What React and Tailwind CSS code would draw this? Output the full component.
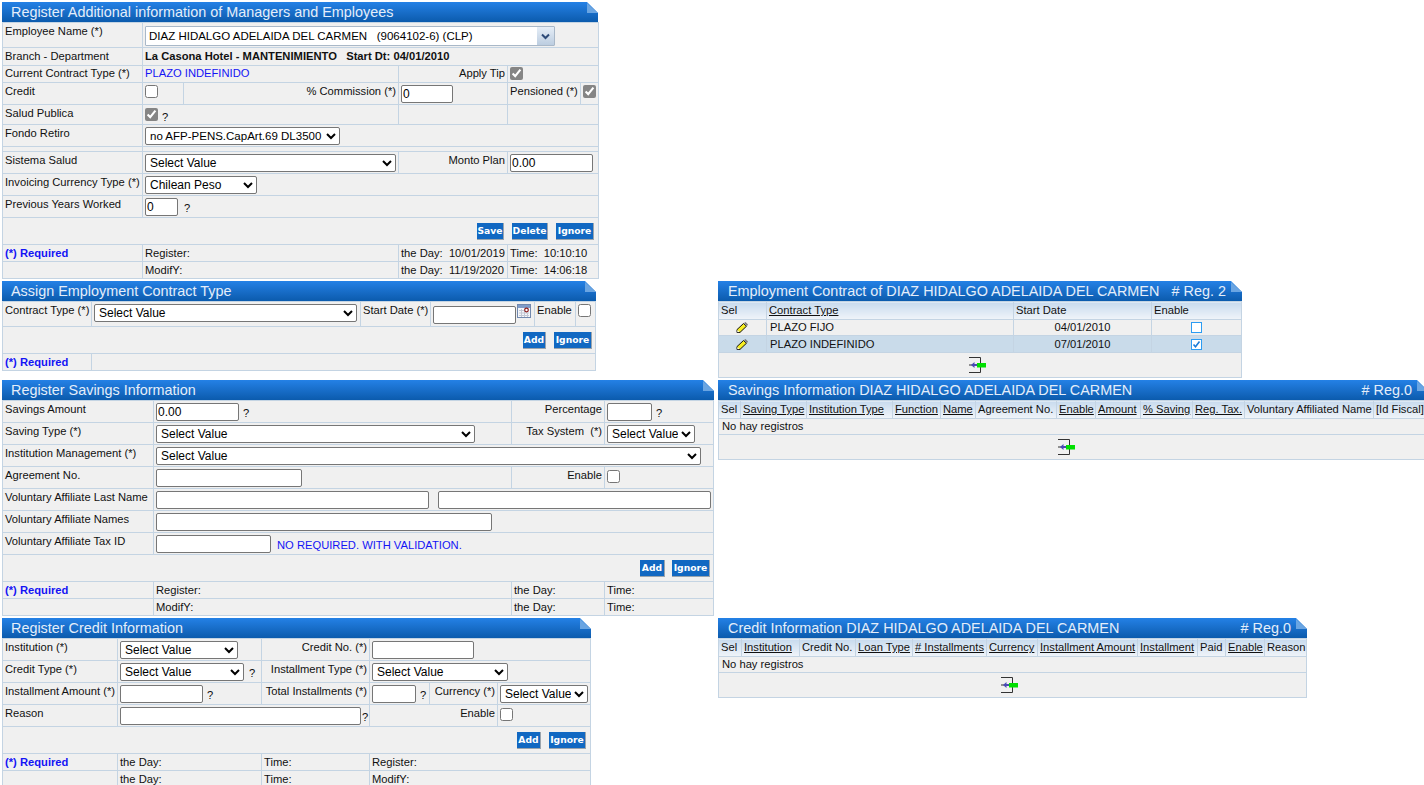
import React from 'react';

const line = 'border border-[#c4d4e3]';
const blue = 'text-[#1414f5]';

// folded corner of the title bars
const Fold = () => (
  <svg className="absolute right-0 top-0" width="12" height="12" viewBox="0 0 12 12">
    <path d="M1 0H12V11Z" fill="#ffffff" />
    <path d="M1 1L12 11H1Z" fill="#6aa5e2" />
  </svg>
);

const Title = ({ children, right, list }) => (
  <div className={`relative flex h-[20px] items-center justify-between bg-gradient-to-b from-[#2481e6] to-[#0b5bad] ${list ? 'pl-[10px]' : 'pl-[9px]'} pr-[16px] text-[14.4px] leading-[20px] text-[#e4eefa]`}>
    <span className="whitespace-pre">{children}</span>
    {right && <span className="whitespace-pre">{right}</span>}
    <Fold />
  </div>
);

const Panel = ({ width, title, right, list, children }) => (
  <div className={width}>
    <Title right={right} list={list}>{title}</Title>
    {children}
  </div>
);

const Grid = ({ cols, children }) => (
  <table className="table-fixed border-collapse bg-[#f0f0f0]" style={{ width: cols.reduce((a, b) => a + b, 0) }}>
    <colgroup>
      {cols.map((c, i) => <col key={i} style={{ width: c }} />)}
    </colgroup>
    <tbody>{children}</tbody>
  </table>
);

const Td = ({ children, span, right, pad = 'pt-[2px]', className = '' }) => (
  <td colSpan={span} className={`${line} ${pad} ${right ? 'pr-[2px] text-right' : 'pl-[2px]'} overflow-hidden whitespace-pre align-top ${className}`}>
    {children}
  </td>
);

const Ctl = ({ children, span, className = '' }) => (
  <td colSpan={span} className={`${line} pl-[2px] pt-[2px] align-top whitespace-pre ${className}`}>{children}</td>
);

const Sel = ({ w, size = 'text-[12px]', children = 'Select Value' }) => (
  <select className={`${w} ${size} h-[18px] rounded-[2px] border border-[#767676] bg-white align-top leading-[16px] text-black`} defaultValue={children}>
    <option>{children}</option>
  </select>
);

const Inp = ({ w, value = '' }) => (
  <input readOnly value={value} className={`${w} h-[18px] rounded-[2px] border border-[#767676] bg-white px-[1px] align-top text-[12px] leading-[16px] text-black`} />
);

const Chk = ({ on, className = '' }) => (
  <input type="checkbox" defaultChecked={on} className={`m-0 h-[13px] w-[13px] align-top accent-[#858585] ${className}`} />
);

const Q = ({ className = 'ml-[4px]' }) => <span className={`${className} inline-block pt-[4px] align-top`}>?</span>;

const Btn = ({ w, children }) => (
  <button className={`${w} h-[17px] border-r border-b border-[#9aa4ad] bg-[#1168c2] text-center font-['DejaVu_Sans'] text-[9.2px] font-bold leading-[15px] text-white`}>
    {children}
  </button>
);

const Actions = ({ span, gap, pr, children }) => (
  <tr className="h-[27px]">
    <td colSpan={span} className={`${line} align-middle`}>
      <div className={`flex justify-end ${gap} ${pr}`}>{children}</div>
    </td>
  </tr>
);

const Pencil = () => (
  <svg width="12" height="11" viewBox="0 0 12 11" className="ml-[17px] block">
    <path d="M7.5 1.5L10.5 4.2L4 10.4L1 10.5L1 7.6Z" fill="#f7ee22" stroke="#111" strokeWidth="1" />
    <path d="M8 1L9.5 0L12 2.4L11 4Z" fill="#7d7d7d" />
    <path d="M1.4 8L3.4 10L1.4 10.2Z" fill="#fff" />
  </svg>
);

const Pager = () => (
  <svg width="17" height="16" viewBox="0 0 17 16" className="block">
    <path d="M0 0.5H11.5V15.5H0M0 8H3" fill="none" stroke="#333" strokeWidth="1" />
    <path d="M2 8L5.5 5V7H8V9H5.5V11Z" fill="#4a4ab4" />
    <rect x="8" y="6" width="9" height="4.5" fill="#00e000" />
  </svg>
);

const Calendar = () => (
  <svg width="14" height="14" viewBox="0 0 14 14" className="block">
    <rect x="0.5" y="0.5" width="13" height="13" fill="#f4f6fa" stroke="#7188ae" />
    <rect x="1" y="1" width="12" height="3" fill="#7f9cc9" />
    <path d="M2 6.5H8M2 9H12M2 11.5H12M4.5 5V13M7.5 5V13M10.5 9V13" stroke="#c3c7d3" strokeWidth="1" />
    <circle cx="9.5" cy="6" r="1.8" fill="#fff" stroke="#8b1a1a" strokeWidth="1.2" />
  </svg>
);

const TableCheck = ({ on }) => (
  <span className="mx-auto block h-[11px] w-[11px] border border-[#2c9cf2] bg-white">
    {on && (
      <svg width="9" height="9" viewBox="0 0 9 9" className="block">
        <path d="M1.5 4.5L3.5 6.8L7.5 1.5" fill="none" stroke="#1a7bd8" strokeWidth="1.6" />
      </svg>
    )}
  </span>
);

const Th = ({ children, u }) => (
  <th className={`${line} overflow-hidden whitespace-pre bg-gradient-to-b from-[#c8dbee] to-[#f0f4f9] px-[2px] text-left align-middle font-normal`}>
    <span className={u ? 'underline' : ''}>{children}</span>
  </th>
);

const PagerRow = ({ span, pr }) => (
  <tr className="h-[25px]">
    <td colSpan={span} className={`${line} align-middle`}>
      <div className={`flex justify-center ${pr}`}><Pager /></div>
    </td>
  </tr>
);

const EmptyList = ({ cols, heads, width, title, right, pr }) => (
  <Panel width={width} title={title} right={right} list>
    <Grid cols={cols}>
      <tr className="h-[18px]">
        {heads.map(([t, u], i) => <Th key={i} u={u}>{t}</Th>)}
      </tr>
      <tr className="h-[16px]">
        <td colSpan={cols.length} className={`${line} pl-[3px] align-middle`}>No hay registros</td>
      </tr>
      <PagerRow span={cols.length} pr={pr} />
    </Grid>
  </Panel>
);

export default function App() {
  return (
    <div className="grid h-[785px] grid-cols-[718px_706px] grid-rows-[279px_99px_238px_165px] overflow-hidden bg-white pt-[2px] font-['Liberation_Sans',Arial,sans-serif] text-[11.2px] leading-[13px] text-[#111]">
      {/* managers and employees */}
      <div className="col-start-1 row-start-1 pl-[2px]">
        <Panel width="w-[596px]" title="Register Additional information of Managers and Employees">
          <Grid cols={[140, 41, 215, 109, 73, 18]}>
            <tr className="h-[25px]">
              <Td>Employee Name (*)</Td>
              <td colSpan={5} className={`${line} pl-[2px] pt-[3px] align-top`}>
                <div className="flex h-[20px] w-[410px] rounded-[1px] border border-[#a9b8c8] bg-white">
                  <span className="flex-1 whitespace-pre pl-[3px] text-[11.5px] leading-[18px] text-black">DIAZ HIDALGO ADELAIDA DEL CARMEN   (9064102-6) (CLP)</span>
                  <span className="flex w-[17px] items-center justify-center bg-gradient-to-b from-[#e6eef7] to-[#bccde0]">
                    <svg width="9" height="7" viewBox="0 0 9 7"><path d="M1 1.5L4.5 5L8 1.5" fill="none" stroke="#2c4a78" strokeWidth="2" /></svg>
                  </span>
                </div>
              </td>
            </tr>
            <tr className="h-[18px]">
              <Td>Branch - Department</Td>
              <Td span={5} className="font-bold">La Casona Hotel - MANTENIMIENTO   Start Dt: 04/01/2010</Td>
            </tr>
            <tr className="h-[17px]">
              <Td pad="pt-[1px]">Current Contract Type (*)</Td>
              <Td span={2} pad="pt-[1px]" className={blue}>PLAZO INDEFINIDO</Td>
              <Td right pad="pt-[1px]">Apply Tip</Td>
              <td colSpan={2} className={`${line} pl-[2px] pt-[1px] align-top`}><Chk on /></td>
            </tr>
            <tr className="h-[22px]">
              <Td>Credit</Td>
              <Ctl><Chk /></Ctl>
              <Td right>% Commission (*)</Td>
              <Ctl><Inp w="w-[52px]" value="0" /></Ctl>
              <Td>Pensioned (*)</Td>
              <Ctl><Chk on /></Ctl>
            </tr>
            <tr className="h-[20px]">
              <Td>Salud Publica</Td>
              <Ctl span={2}><Chk on className="mt-[1px]" /><Q /></Ctl>
              <Td />
              <Td span={2} />
            </tr>
            <tr className="h-[22px]">
              <Td>Fondo Retiro</Td>
              <Ctl span={5}><Sel w="w-[195px]" size="text-[11.5px]">no AFP-PENS.CapArt.69 DL3500</Sel></Ctl>
            </tr>
            <tr className="h-[5px]">
              <td className={line} />
              <td colSpan={5} className={line} />
            </tr>
            <tr className="h-[22px]">
              <Td>Sistema Salud</Td>
              <Ctl span={2}><Sel w="w-[251px]" /></Ctl>
              <Td right>Monto Plan</Td>
              <Ctl span={2}><Inp w="w-[83px]" value="0.00" /></Ctl>
            </tr>
            <tr className="h-[22px]">
              <Td>Invoicing Currency Type (*)</Td>
              <Ctl span={5}><Sel w="w-[112px]">Chilean Peso</Sel></Ctl>
            </tr>
            <tr className="h-[22px]">
              <Td>Previous Years Worked</Td>
              <Ctl span={5}><Inp w="w-[33px]" value="0" /><Q className="ml-[6px]" /></Ctl>
            </tr>
            <Actions span={6} gap="gap-[8px]" pr="pr-[4px]">
              <Btn w="w-[27px]">Save</Btn>
              <Btn w="w-[36px]">Delete</Btn>
              <Btn w="w-[38px]">Ignore</Btn>
            </Actions>
            <tr className="h-[17px]">
              <Td className={`font-bold ${blue}`}>(*) Required</Td>
              <Td span={2}>Register:</Td>
              <Td>the Day:  10/01/2019</Td>
              <Td span={2}>Time:  10:10:10</Td>
            </tr>
            <tr className="h-[17px]">
              <Td />
              <Td span={2}>ModifY:</Td>
              <Td>the Day:  11/19/2020</Td>
              <Td span={2}>Time:  14:06:18</Td>
            </tr>
          </Grid>
        </Panel>
      </div>

      {/* contract type */}
      <div className="col-start-1 row-start-2 pl-[2px]">
        <Panel width="w-[594px]" title="Assign Employment Contract Type">
          <Grid cols={[89, 269, 70, 104, 41, 20]}>
            <tr className="h-[25px]">
              <Td>Contract Type (*)</Td>
              <Ctl><Sel w="w-[263px]" /></Ctl>
              <Td>Start Date (*)</Td>
              <td className={`${line} pl-[2px] align-top`}>
                <div className="flex items-start gap-[1px] pt-[4px]">
                  <Inp w="w-[83px]" />
                  <span className="-mt-[2px]"><Calendar /></span>
                </div>
              </td>
              <Td>Enable</Td>
              <Ctl><Chk /></Ctl>
            </tr>
            <Actions span={6} gap="gap-[8px]" pr="pr-[3px]">
              <Btn w="w-[23px]">Add</Btn>
              <Btn w="w-[38px]">Ignore</Btn>
            </Actions>
            <tr className="h-[17px]">
              <Td className={`font-bold ${blue}`}>(*) Required</Td>
              <Td span={5} />
            </tr>
          </Grid>
        </Panel>
      </div>

      {/* employment contracts */}
      <div className="col-start-2 row-start-2">
        <Panel width="w-[524px]" title="Employment Contract of DIAZ HIDALGO ADELAIDA DEL CARMEN" right="# Reg. 2" list>
          <Grid cols={[48, 247, 138, 90]}>
            <tr className="h-[18px]">
              <Th>Sel</Th>
              <Th u>Contract Type</Th>
              <Th>Start Date</Th>
              <Th>Enable</Th>
            </tr>
            <tr className="h-[16px]">
              <td className={line}><Pencil /></td>
              <td className={`${line} pl-[3px] align-middle`}>PLAZO FIJO</td>
              <td className={`${line} text-center align-middle`}>04/01/2010</td>
              <td className={line}><TableCheck /></td>
            </tr>
            <tr className="h-[17px] bg-[#c9dbea]">
              <td className={line}><Pencil /></td>
              <td className={`${line} pl-[3px] align-middle`}>PLAZO INDEFINIDO</td>
              <td className={`${line} text-center align-middle`}>07/01/2010</td>
              <td className={line}><TableCheck on /></td>
            </tr>
            <PagerRow span={4} pr="pr-[6px]" />
          </Grid>
        </Panel>
      </div>

      {/* savings form */}
      <div className="col-start-1 row-start-3 pl-[2px]">
        <Panel width="w-[712px]" title="Register Savings Information">
          <Grid cols={[151, 358, 93, 109]}>
            <tr className="h-[22px]">
              <Td>Savings Amount</Td>
              <Ctl><Inp w="w-[83px]" value="0.00" /><Q /></Ctl>
              <Td right>Percentage</Td>
              <Ctl><Inp w="w-[45px]" /><Q /></Ctl>
            </tr>
            <tr className="h-[22px]">
              <Td>Saving Type (*)</Td>
              <Ctl><Sel w="w-[319px]" /></Ctl>
              <Td right>Tax System  (*)</Td>
              <Ctl><Sel w="w-[88px]" /></Ctl>
            </tr>
            <tr className="h-[22px]">
              <Td>Institution Management (*)</Td>
              <Ctl span={3}><Sel w="w-[545px]" /></Ctl>
            </tr>
            <tr className="h-[22px]">
              <Td>Agreement No.</Td>
              <Ctl><Inp w="w-[146px]" /></Ctl>
              <Td right>Enable</Td>
              <Ctl><Chk className="mt-[1px]" /></Ctl>
            </tr>
            <tr className="h-[22px]">
              <Td>Voluntary Affiliate Last Name</Td>
              <Ctl span={3}>
                <div className="flex gap-[9px]"><Inp w="w-[273px]" /><Inp w="w-[273px]" /></div>
              </Ctl>
            </tr>
            <tr className="h-[22px]">
              <Td>Voluntary Affiliate Names</Td>
              <Ctl span={3}><Inp w="w-[336px]" /></Ctl>
            </tr>
            <tr className="h-[22px]">
              <Td>Voluntary Affiliate Tax ID</Td>
              <Ctl span={3}>
                <Inp w="w-[115px]" /><span className={`ml-[6px] inline-block pt-[4px] align-top ${blue}`}>NO REQUIRED. WITH VALIDATION.</span>
              </Ctl>
            </tr>
            <Actions span={4} gap="gap-[7px]" pr="pr-[3px]">
              <Btn w="w-[25px]">Add</Btn>
              <Btn w="w-[38px]">Ignore</Btn>
            </Actions>
            <tr className="h-[17px]">
              <Td className={`font-bold ${blue}`}>(*) Required</Td>
              <Td>Register:</Td>
              <Td>the Day:</Td>
              <Td>Time:</Td>
            </tr>
            <tr className="h-[17px]">
              <Td />
              <Td>ModifY:</Td>
              <Td>the Day:</Td>
              <Td>Time:</Td>
            </tr>
          </Grid>
        </Panel>
      </div>

      {/* savings list */}
      <div className="col-start-2 row-start-3">
        <EmptyList
          width="w-[710px]"
          title="Savings Information DIAZ HIDALGO ADELAIDA DEL CARMEN"
          right="# Reg.0"
          pr="pr-[14px]"
          cols={[22, 66, 86, 48, 35, 81, 39, 45, 52, 52, 129, 55]}
          heads={[['Sel'], ['Saving Type', 1], ['Institution Type', 1], ['Function', 1], ['Name', 1], ['Agreement No.'], ['Enable', 1], ['Amount', 1], ['% Saving', 1], ['Reg. Tax.', 1], ['Voluntary Affiliated Name'], ['[Id Fiscal]']]}
        />
      </div>

      {/* credit form */}
      <div className="col-start-1 row-start-4 pl-[2px]">
        <Panel width="w-[589px]" title="Register Credit Information">
          <Grid cols={[115, 144, 108, 60, 68, 93]}>
            <tr className="h-[22px]">
              <Td>Institution (*)</Td>
              <Ctl><Sel w="w-[118px]" /></Ctl>
              <Td right>Credit No. (*)</Td>
              <Ctl span={3}><Inp w="w-[102px]" /></Ctl>
            </tr>
            <tr className="h-[22px]">
              <Td>Credit Type (*)</Td>
              <Ctl><Sel w="w-[124px]" /><Q className="ml-[5px]" /></Ctl>
              <Td right>Installment Type (*)</Td>
              <Ctl span={3}><Sel w="w-[136px]" /></Ctl>
            </tr>
            <tr className="h-[22px]">
              <Td>Installment Amount (*)</Td>
              <Ctl><Inp w="w-[83px]" /><Q /></Ctl>
              <Td right>Total Installments (*)</Td>
              <Ctl><Inp w="w-[44px]" /><Q /></Ctl>
              <Td right>Currency (*)</Td>
              <Ctl><Sel w="w-[88px]" /></Ctl>
            </tr>
            <tr className="h-[22px]">
              <Td>Reason</Td>
              <Ctl span={2}><Inp w="w-[241px]" /><Q className="ml-[1px]" /></Ctl>
              <Td span={2} right>Enable</Td>
              <Ctl><Chk className="mt-[1px]" /></Ctl>
            </tr>
            <Actions span={6} gap="gap-[8px]" pr="pr-[4px]">
              <Btn w="w-[24px]">Add</Btn>
              <Btn w="w-[37px]">Ignore</Btn>
            </Actions>
            <tr className="h-[17px]">
              <Td className={`font-bold ${blue}`}>(*) Required</Td>
              <Td>the Day:</Td>
              <Td>Time:</Td>
              <Td span={3}>Register:</Td>
            </tr>
            <tr className="h-[17px]">
              <Td />
              <Td>the Day:</Td>
              <Td>Time:</Td>
              <Td span={3}>ModifY:</Td>
            </tr>
          </Grid>
        </Panel>
      </div>

      {/* credit list */}
      <div className="col-start-2 row-start-4">
        <EmptyList
          width="w-[589px]"
          title="Credit Information DIAZ HIDALGO ADELAIDA DEL CARMEN"
          right="# Reg.0"
          pr="pr-[7px]"
          cols={[23, 58, 56, 57, 74, 51, 100, 60, 28, 39, 42]}
          heads={[['Sel'], ['Institution', 1], ['Credit No.'], ['Loan Type', 1], ['# Installments', 1], ['Currency', 1], ['Installment Amount', 1], ['Installment', 1], ['Paid'], ['Enable', 1], ['Reason']]}
        />
      </div>
    </div>
  );
}
